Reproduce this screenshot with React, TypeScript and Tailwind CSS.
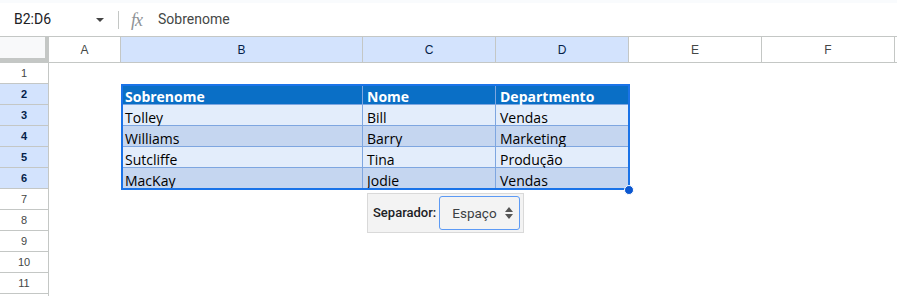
import React from 'react';

const cols = [
  { key: 'A', w: 'w-[72px]' },
  { key: 'B', w: 'w-[242px]' },
  { key: 'C', w: 'w-[133px]' },
  { key: 'D', w: 'w-[133px]' },
  { key: 'E', w: 'w-[133px]' },
  { key: 'F', w: 'w-[133px]' },
];

const table = [
  ['Sobrenome', 'Nome', 'Departmento'],
  ['Tolley', 'Bill', 'Vendas'],
  ['Williams', 'Barry', 'Marketing'],
  ['Sutcliffe', 'Tina', 'Produção'],
  ['MacKay', 'Jodie', 'Vendas'],
];

const rowNums = [1, 2, 3, 4, 5, 6, 7, 8, 9, 10, 11, 12];

const isSelCol = (k: string) => k === 'B' || k === 'C' || k === 'D';

const App: React.FC = () => {
  return (
    <div className="relative w-[897px] h-[296px] overflow-hidden bg-white font-['Roboto','Liberation_Sans',sans-serif]">
      <div className="h-[3px] bg-[#f9fbfd]" />

      {/* Formula bar */}
      <div className="flex items-center h-[33px] text-[14px]">
        <div className="w-[90px] pl-[14px] text-[#202124]">B2:D6</div>
        <svg width="10" height="6" viewBox="0 0 10 6" className="ml-[5px]">
          <path d="M1 1 L9 1 L5 5 Z" fill="#444" />
        </svg>
        <div className="ml-[13px] w-px h-[18px] bg-[#c4c7c5]" />
        <span className="ml-[12px] w-[18px] text-[18px] italic font-['Liberation_Serif',serif] text-[#8e9296] tracking-[-1px] leading-none">
          fx
        </span>
        <span className="ml-[9px] text-[#444746]">Sobrenome</span>
      </div>

      {/* Column headers */}
      <div className="flex h-[27px] border-t border-b border-[#c4c7c5] text-[12px] font-['Liberation_Sans',sans-serif] text-[#444746]">
        <div className="relative w-[49px] shrink-0 bg-[#f8f9fa] border-r-[4px] border-[#c4c7c5]">
          <div className="absolute left-0 right-0 bottom-0 h-[4px] bg-[#c4c7c5]" />
        </div>
        {cols.map((c) => (
          <div
            key={c.key}
            className={`${c.w} shrink-0 flex items-center justify-center border-r border-[#c4c7c5] ${
              isSelCol(c.key) ? 'bg-[#d3e3fd] text-[#041e49]' : ''
            }`}
          >
            {c.key}
          </div>
        ))}
      </div>

      {/* Rows */}
      {rowNums.map((n) => {
        const sel = n >= 2 && n <= 6;
        const data = sel ? table[n - 2] : null;
        return (
          <div key={n} className="flex h-[21px]">
            <div
              className={`w-[49px] shrink-0 flex items-center justify-center border-r border-b border-[#c4c7c5] text-[11px] font-['Liberation_Sans',sans-serif] ${
                sel ? 'bg-[#d3e3fd] text-[#041e49] font-bold' : 'text-[#444746]'
              }`}
            >
              {n < 12 ? n : ''}
            </div>
            <div className="w-[72px] shrink-0" />
            {data
              ? data.map((txt, i) => {
                  const header = n === 2;
                  const bg = header ? 'bg-[#0a6fc6]' : n % 2 === 1 ? 'bg-[#e3edfb]' : 'bg-[#c5d6f0]';
                  const w = i === 0 ? 'w-[242px]' : 'w-[133px]';
                  return (
                    <div
                      key={i}
                      className={`${w} shrink-0 ${bg} border-r border-b border-[#7ea6e0] pl-[4px] pt-[5px] text-[14px] font-['Open_Sans',sans-serif] leading-[15px] ${
                        header ? 'text-white font-bold' : 'text-black'
                      }`}
                    >
                      {txt}
                    </div>
                  );
                })
              : null}
          </div>
        );
      })}

      {/* Selection outline */}
      <div className="absolute left-[121px] top-[84px] w-[509px] h-[106px] border-2 border-[#1a73e8] pointer-events-none" />
      <div className="absolute left-[624px] top-[185px] w-[10px] h-[10px] rounded-full bg-[#0b57d0] border border-white" />

      {/* Separator control */}
      <div className="absolute left-[367px] top-[193px] w-[157px] h-[40px] bg-[#f3f3f3] border border-[#d9d9d9] flex items-center pl-[5px] gap-[3px]">
        <span className="text-[13px] font-medium text-[#202124]">Separador:</span>
        <div className="w-[81px] h-[34px] rounded-[3px] border border-[#5c9af5] flex items-center pl-[12px] pr-[5px] justify-between">
          <span className="text-[13.5px] text-[#3c4043]">Espaço</span>
          <svg width="10" height="14" viewBox="0 0 10 14">
            <path d="M5 1 L9 6 L1 6 Z M5 13 L9 8 L1 8 Z" fill="#555" />
          </svg>
        </div>
      </div>
    </div>
  );
};

export default App;
